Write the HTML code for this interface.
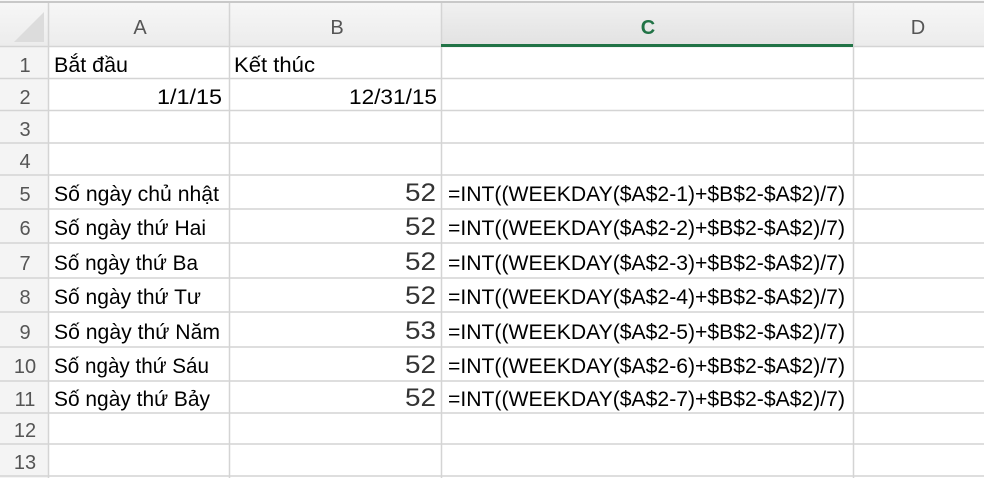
<!DOCTYPE html>
<html><head><meta charset="utf-8"><style>html,body{margin:0;padding:0;background:#fff}svg{display:block}</style></head><body>
<svg width="984" height="478" viewBox="0 0 984 478" xmlns="http://www.w3.org/2000/svg" font-family="'Liberation Sans', sans-serif">
<defs><linearGradient id="g" x1="0" y1="0" x2="0" y2="1"><stop offset="0" stop-color="#f7f7f7"/><stop offset="1" stop-color="#ececec"/></linearGradient>
<linearGradient id="gs" x1="0" y1="0" x2="0" y2="1"><stop offset="0" stop-color="#f0f0f0"/><stop offset="1" stop-color="#e2e2e2"/></linearGradient></defs>
<rect x="0" y="0" width="984" height="46" fill="url(#g)"/>
<rect x="0" y="46" width="48" height="432" fill="#f4f4f4"/>
<rect x="441" y="3" width="412" height="43" fill="url(#gs)"/>
<rect x="0" y="1" width="984" height="2" fill="#c8c8c8"/>
<polygon points="14,42 44,12 44,42" fill="#dcdcdc"/>
<g stroke="#d4d4d4" stroke-width="1.5">
<line x1="48.5" y1="3" x2="48.5" y2="478"/>
<line x1="229.5" y1="3" x2="229.5" y2="478"/>
<line x1="441.5" y1="3" x2="441.5" y2="478"/>
<line x1="853.5" y1="3" x2="853.5" y2="478"/>
<line x1="0" y1="46.5" x2="984" y2="46.5"/>
<line x1="0" y1="78.5" x2="984" y2="78.5"/>
<line x1="0" y1="110.5" x2="984" y2="110.5"/>
<line x1="0" y1="143" x2="984" y2="143"/>
<line x1="0" y1="175" x2="984" y2="175"/>
<line x1="0" y1="209" x2="984" y2="209"/>
<line x1="0" y1="243" x2="984" y2="243"/>
<line x1="0" y1="278" x2="984" y2="278"/>
<line x1="0" y1="312" x2="984" y2="312"/>
<line x1="0" y1="347" x2="984" y2="347"/>
<line x1="0" y1="381" x2="984" y2="381"/>
<line x1="0" y1="413" x2="984" y2="413"/>
<line x1="0" y1="444" x2="984" y2="444"/>
<line x1="0" y1="476" x2="984" y2="476"/>
</g>
<rect x="441" y="44" width="412" height="3" fill="#217346"/>
<g font-size="20" fill="#555" text-anchor="middle">
<text x="140" y="34">A</text><text x="337" y="34">B</text><text x="648" y="34" fill="#217346" font-weight="bold">C</text><text x="918" y="34">D</text>
</g>
<g font-size="20" fill="#555" text-anchor="middle">
<text x="25" y="72">1</text><text x="25" y="104">2</text><text x="25" y="136">3</text><text x="25" y="168">4</text>
<text x="25" y="201">5</text><text x="25" y="235">6</text><text x="25" y="270">7</text><text x="25" y="304">8</text>
<text x="25" y="339">9</text><text x="25" y="373">10</text><text x="25" y="406">11</text><text x="25" y="437">12</text><text x="25" y="469">13</text>
</g>
<g font-size="21" fill="#000">
<text x="54" y="72" textLength="74" lengthAdjust="spacingAndGlyphs">Bắt đầu</text>
<text x="234" y="72" textLength="81" lengthAdjust="spacingAndGlyphs">Kết thúc</text>
<text x="157" y="104" textLength="65" lengthAdjust="spacingAndGlyphs">1/1/15</text>
<text x="349" y="104" textLength="88" lengthAdjust="spacingAndGlyphs">12/31/15</text>
<text x="54" y="201" textLength="165" lengthAdjust="spacingAndGlyphs">Số ngày chủ nhật</text>
<text x="54" y="235" textLength="152" lengthAdjust="spacingAndGlyphs">Số ngày thứ Hai</text>
<text x="54" y="270" textLength="144" lengthAdjust="spacingAndGlyphs">Số ngày thứ Ba</text>
<text x="54" y="304" textLength="147" lengthAdjust="spacingAndGlyphs">Số ngày thứ Tư</text>
<text x="54" y="339" textLength="166" lengthAdjust="spacingAndGlyphs">Số ngày thứ Năm</text>
<text x="54" y="373" textLength="155" lengthAdjust="spacingAndGlyphs">Số ngày thứ Sáu</text>
<text x="54" y="406" textLength="156" lengthAdjust="spacingAndGlyphs">Số ngày thứ Bảy</text>
</g>
<g font-size="25" fill="#333">
<text x="405" y="201" textLength="31" lengthAdjust="spacingAndGlyphs">52</text>
<text x="405" y="235" textLength="31" lengthAdjust="spacingAndGlyphs">52</text>
<text x="405" y="270" textLength="31" lengthAdjust="spacingAndGlyphs">52</text>
<text x="405" y="304" textLength="31" lengthAdjust="spacingAndGlyphs">52</text>
<text x="405" y="339" textLength="31" lengthAdjust="spacingAndGlyphs">53</text>
<text x="405" y="373" textLength="31" lengthAdjust="spacingAndGlyphs">52</text>
<text x="405" y="406" textLength="31" lengthAdjust="spacingAndGlyphs">52</text>
</g>
<g font-size="21" fill="#000">
<text x="448" y="201" textLength="397" lengthAdjust="spacingAndGlyphs">=INT((WEEKDAY($A$2-1)+$B$2-$A$2)/7)</text>
<text x="448" y="235" textLength="397" lengthAdjust="spacingAndGlyphs">=INT((WEEKDAY($A$2-2)+$B$2-$A$2)/7)</text>
<text x="448" y="270" textLength="397" lengthAdjust="spacingAndGlyphs">=INT((WEEKDAY($A$2-3)+$B$2-$A$2)/7)</text>
<text x="448" y="304" textLength="397" lengthAdjust="spacingAndGlyphs">=INT((WEEKDAY($A$2-4)+$B$2-$A$2)/7)</text>
<text x="448" y="339" textLength="397" lengthAdjust="spacingAndGlyphs">=INT((WEEKDAY($A$2-5)+$B$2-$A$2)/7)</text>
<text x="448" y="373" textLength="397" lengthAdjust="spacingAndGlyphs">=INT((WEEKDAY($A$2-6)+$B$2-$A$2)/7)</text>
<text x="448" y="406" textLength="397" lengthAdjust="spacingAndGlyphs">=INT((WEEKDAY($A$2-7)+$B$2-$A$2)/7)</text>
</g>
</svg>
</body></html>
